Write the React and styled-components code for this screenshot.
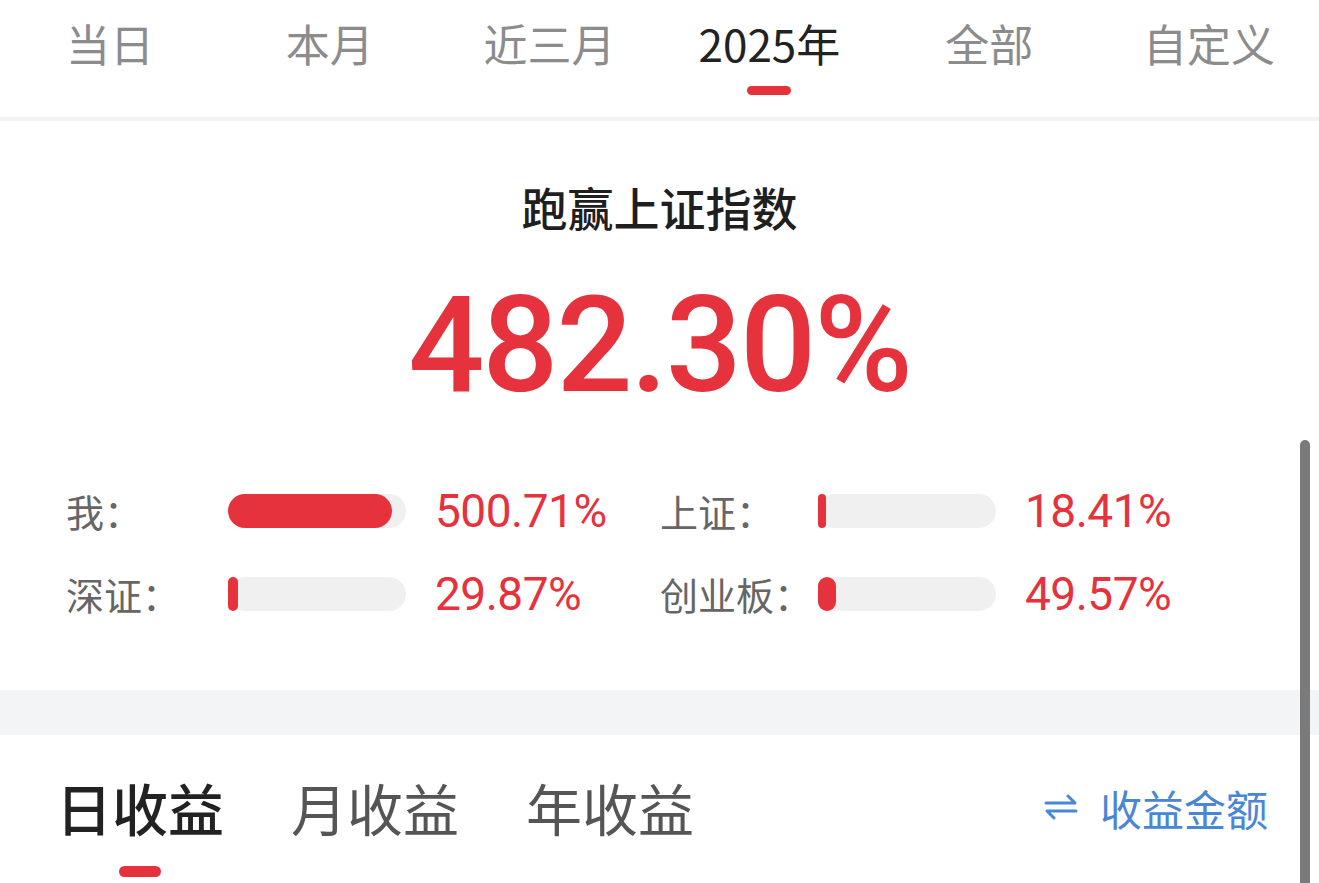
import React from "react";
import styled, { createGlobalStyle } from "styled-components";

const RED = "#e6323c";
const CJK = `"Noto Sans CJK SC", "Noto Sans", sans-serif`;
const NUM = `Roboto, "Noto Sans CJK SC", sans-serif`;

const GlobalStyle = createGlobalStyle`
  html, body {
    margin: 0;
    padding: 0;
    background: #fff;
    font-family: ${CJK};
  }
  * { box-sizing: border-box; }
`;

const Page = styled.div`
  position: relative;
  width: 1319px;
  height: 883px;
  overflow: hidden;
  background: #fff;
`;

const Header = styled.div`
  display: grid;
  grid-template-columns: repeat(6, 1fr);
  height: 121px;
  border-bottom: 4px solid #f2f2f2;
`;

const Tab = styled.div`
  display: flex;
  flex-direction: column;
  align-items: center;
  padding-top: 21px;
`;

const TabLabel = styled.div`
  font-family: ${CJK};
  font-size: 44px;
  line-height: 44px;
  color: ${({ active }) => (active ? "#222" : "#8c8c8c")};
`;

const Indicator = styled.div`
  width: ${({ w }) => w}px;
  height: ${({ h }) => h}px;
  margin-top: ${({ mt }) => mt}px;
  border-radius: 6px;
  background: ${({ show }) => (show ? RED : "transparent")};
`;

const Summary = styled.section`
  display: flex;
  flex-direction: column;
  align-items: center;
  padding: 62px 0 0;
  height: 569px;
`;

const Title = styled.div`
  font-size: 46px;
  line-height: 46px;
  font-weight: 500;
  color: #1f1f1f;
`;

const BigNumber = styled.div`
  margin-top: 50px;
  font-family: ${NUM};
  font-size: 134px;
  line-height: 134px;
  font-weight: 500;
  letter-spacing: -2px;
  color: ${RED};
`;

const Stats = styled.div`
  align-self: stretch;
  display: grid;
  grid-template-columns: 594px 1fr;
  row-gap: 37px;
  margin-top: 75px;
  padding-left: 66px;
`;

const Stat = styled.div`
  display: grid;
  grid-template-columns: ${({ labelW }) => labelW}px 178px auto;
  align-items: center;
  height: 46px;
`;

const Label = styled.div`
  font-size: 38px;
  line-height: 46px;
  white-space: nowrap;
  color: #666;
`;

const Track = styled.div`
  height: 34px;
  border-radius: 17px;
  background: #f0f0f0;
`;

const Fill = styled.div`
  height: 100%;
  border-radius: 17px;
  background: ${RED};
`;

const Value = styled.div`
  margin-left: 29px;
  font-family: ${NUM};
  font-size: 46px;
  line-height: 46px;
  color: ${RED};
  letter-spacing: -0.5px;
`;

const Band = styled.div`
  height: 45px;
  background: #f3f4f6;
`;

const Bottom = styled.div`
  display: flex;
  align-items: flex-start;
  padding: 44px 51px 0 56px;
`;

const SubTabs = styled.div`
  display: flex;
  gap: 67px;
  flex: 1;
`;

const SubTab = styled.div`
  display: flex;
  flex-direction: column;
  align-items: center;
`;

const SubLabel = styled.div`
  font-size: 56px;
  line-height: 56px;
  font-weight: ${({ active }) => (active ? 500 : 400)};
  color: ${({ active }) => (active ? "#222" : "#555")};
`;

const Switch = styled.div`
  display: flex;
  align-items: center;
  gap: 22px;
  height: 56px;
  color: #4a86d6;
  font-size: 42px;
`;

const ScrollBar = styled.div`
  position: absolute;
  left: 1300px;
  top: 440px;
  bottom: -10px;
  width: 10px;
  border-radius: 5px;
  background: #7a7a7a;
`;

const periods = ["当日", "本月", "近三月", "2025年", "全部", "自定义"];

const stats = [
  { label: "我：", value: "500.71%", fill: 164, labelW: 162 },
  { label: "上证：", value: "18.41%", fill: 8, labelW: 158 },
  { label: "深证：", value: "29.87%", fill: 10, labelW: 162 },
  { label: "创业板：", value: "49.57%", fill: 18, labelW: 158 },
];

function SwapIcon() {
  return (
    <svg width="34" height="26" viewBox="0 0 34 26" fill="none">
      <path d="M2 9 H31 L24 2" stroke="#4a86d6" strokeWidth="3" strokeLinecap="round" strokeLinejoin="round" />
      <path d="M32 17 H3 L10 24" stroke="#4a86d6" strokeWidth="3" strokeLinecap="round" strokeLinejoin="round" />
    </svg>
  );
}

export default function App() {
  return (
    <Page>
      <GlobalStyle />
      <Header>
        {periods.map((p) => (
          <Tab key={p}>
            <TabLabel active={p === "2025年"}>{p}</TabLabel>
            <Indicator show={p === "2025年"} w={44} h={9} mt={21} />
          </Tab>
        ))}
      </Header>

      <Summary>
        <Title>跑赢上证指数</Title>
        <BigNumber>482.30%</BigNumber>
        <Stats>
          {stats.map((s) => (
            <Stat key={s.label} labelW={s.labelW}>
              <Label>{s.label}</Label>
              <Track>
                <Fill style={{ width: `${s.fill}px` }} />
              </Track>
              <Value>{s.value}</Value>
            </Stat>
          ))}
        </Stats>
      </Summary>

      <Band />

      <Bottom>
        <SubTabs>
          {["日收益", "月收益", "年收益"].map((t, i) => (
            <SubTab key={t}>
              <SubLabel active={i === 0}>{t}</SubLabel>
              <Indicator show={i === 0} w={42} h={11} mt={31} />
            </SubTab>
          ))}
        </SubTabs>
        <Switch>
          <SwapIcon />
          <span>收益金额</span>
        </Switch>
      </Bottom>

      <ScrollBar />
    </Page>
  );
}
